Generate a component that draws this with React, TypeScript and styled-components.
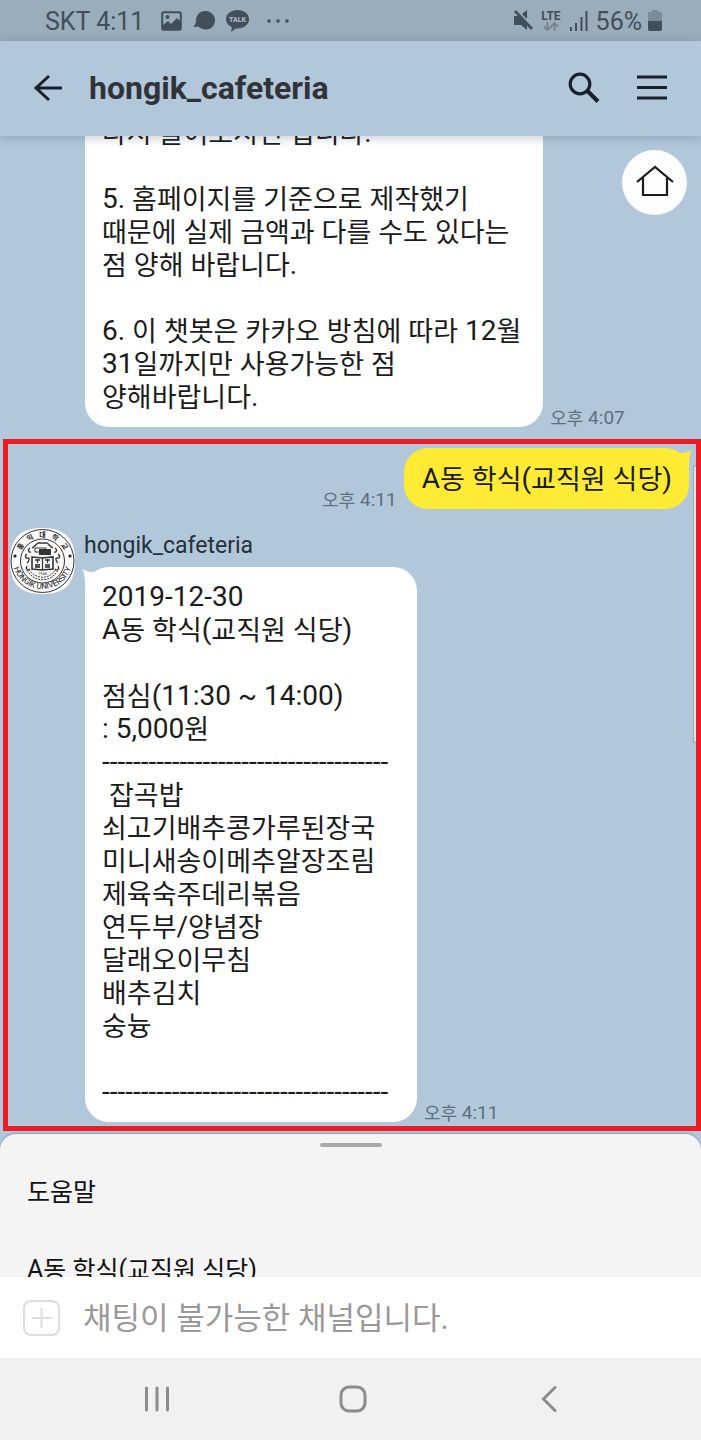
import React from "react";
import styled, { createGlobalStyle } from "styled-components";

const latin = `Roboto, "Noto Sans CJK KR", sans-serif`;

const GlobalStyle = createGlobalStyle`
  * { box-sizing: border-box; }
  body { margin: 0; background: #b2c7da; font-family: ${latin}; color: #1b1b1b; }
  button { border: 0; padding: 0; background: none; font: inherit; color: inherit; cursor: pointer; }
  svg { display: block; flex: none; }
`;

const Screen = styled.div`
  display: flex;
  flex-direction: column;
  height: 100vh;
  overflow: hidden;
`;

const StatusBar = styled.div`
  display: flex;
  flex: none;
  align-items: center;
  justify-content: space-between;
  height: 41px;
  padding: 0 39px 0 45px;
  background: #9bacba;
  color: #434f58;
`;

const StatusGroup = styled.div<{ $gap: number }>`
  display: flex;
  align-items: center;
  gap: ${(p) => p.$gap}px;
`;

const StatusText = styled.span`
  font-size: 25px;
  line-height: 28px;
  padding-top: 2px;
`;

const Network = styled.span`
  display: flex;
  flex-direction: column;
  align-items: center;
  font-size: 12px;
  line-height: 12px;
  font-weight: 700;
`;

const Header = styled.header`
  position: relative;
  z-index: 2;
  display: flex;
  flex: none;
  align-items: center;
  height: 95px;
  padding: 0 34px 2px 33px;
  background: #b2c7da;
  color: #18212a;
  box-shadow: 0 2px 10px rgba(60, 80, 100, 0.3);
`;

const Title = styled.h1`
  flex: 1;
  margin: 0 0 0 26px;
  font-size: 32px;
  line-height: 40px;
  font-weight: 700;
  color: #303438;
`;

const HeaderActions = styled.div`
  display: flex;
  align-items: center;
  gap: 37px;
`;

const Chat = styled.main`
  position: relative;
  display: flex;
  flex: 1;
  flex-direction: column;
  justify-content: flex-end;
  min-height: 0;
  overflow: hidden;
  padding-bottom: 3px;
`;

const HomeButton = styled.button`
  position: absolute;
  top: 14px;
  right: 14px;
  display: grid;
  place-items: center;
  width: 65px;
  height: 65px;
  padding-bottom: 4px;
  border-radius: 50%;
  background: #fcfdfe;
`;

const MessageRow = styled.div<{ $mine?: boolean; $indent?: number }>`
  display: flex;
  flex: none;
  align-items: flex-end;
  gap: 7px;
  justify-content: ${(p) => (p.$mine ? "flex-end" : "flex-start")};
  margin-left: ${(p) => p.$indent ?? 0}px;
`;

const Bubble = styled.div<{ $mine?: boolean }>`
  position: relative;
  min-width: ${(p) => (p.$mine ? "0" : "332px")};
  padding: ${(p) => (p.$mine ? "14px 17px 14px 18px" : "13px 22px 14px 17px")};
  border-radius: 24px;
  background: ${(p) => (p.$mine ? "#ffeb33" : "#ffffff")};
  font-size: 28px;
  line-height: 33px;
  white-space: pre;
`;

const Line = styled.div`
  min-height: 33px;
`;

const Hangul = styled.span`
  font-size: 27px;
  line-height: 0;
  vertical-align: -1px;
`;

const HangulSmall = styled(Hangul)`
  font-size: 18px;
`;

const HangulMenu = styled(Hangul)`
  font-size: 25px;
`;

const Tail = styled.svg<{ $side: "left" | "right" }>`
  position: absolute;
  top: 0;
  ${(p) => p.$side}: -3px;
`;

const Time = styled.time`
  font-size: 19px;
  line-height: 18px;
  color: #5f6f7c;
`;

const Highlighted = styled.section`
  position: relative;
  flex: none;
  margin: 12px 0 0 3px;
  padding: 4px 7px 4px 2px;
  border: 5px solid #ed1c24;
`;

const ScrollThumb = styled.span`
  position: absolute;
  top: 21px;
  right: 0;
  width: 3px;
  height: 278px;
  border: 1px solid #9aa6b2;
  border-right: 0;
  border-radius: 3px 0 0 3px;
  background: #dfe6ee;
`;

const Reply = styled.div`
  display: flex;
  gap: 9px;
  margin-top: 19px;
`;

const ReplyBody = styled.div`
  padding-top: 4px;
`;

const Sender = styled.div`
  margin-bottom: 7px;
  font-size: 23px;
  line-height: 28px;
  color: #25303a;
`;

const Sheet = styled.nav`
  display: flex;
  flex: none;
  flex-direction: column;
  height: 143px;
  overflow: hidden;
  border-radius: 16px 16px 0 0;
  background: #f4f4f4;
  box-shadow: 0 -1px 2px rgba(60, 80, 100, 0.35);
`;

const Grip = styled.span`
  flex: none;
  align-self: center;
  width: 62px;
  height: 4px;
  margin: 9px 0 6px;
  border-radius: 2px;
  background: #a9a9a9;
`;

const SheetItem = styled.button`
  flex: none;
  height: 78px;
  padding: 0 27px;
  text-align: left;
  font-size: 25px;
  line-height: 32px;
  color: #111111;
`;

const Composer = styled.form`
  position: relative;
  display: flex;
  flex: none;
  align-items: center;
  gap: 23px;
  height: 81px;
  padding: 0 23px;
  background: #ffffff;
`;

const MessageInput = styled.input`
  flex: 1;
  min-width: 0;
  height: 48px;
  padding: 2px 0 0;
  border: 0;
  outline: 0;
  background: none;
  font-family: ${latin};
  font-size: 31px;
  &::placeholder { color: #999999; opacity: 1; }
`;

const SystemNav = styled.nav`
  display: grid;
  flex: none;
  grid-template-columns: repeat(3, 1fr);
  height: 82px;
  padding: 0 54px 0 59px;
  background: #f1f1f1;
`;

const SystemButton = styled.button`
  display: grid;
  place-items: center;
`;

/* Hangul is set one step smaller than the Latin text around it. */
function Mixed({ text, as: Run = Hangul }: { text: string; as?: React.ElementType }) {
  return (
    <>
      {text.split(/([가-힣]+)/).map((part, i) => (i % 2 ? <Run key={i}>{part}</Run> : part))}
    </>
  );
}

function Lines({ lines }: { lines: string[] }) {
  return (
    <>
      {lines.map((line, i) => (
        <Line key={i}>
          <Mixed text={line} />
        </Line>
      ))}
    </>
  );
}

const RULE = "-".repeat(37);

const notice = [
  "다시 물어보시면 됩니다.",
  "",
  "5. 홈페이지를 기준으로 제작했기",
  "때문에 실제 금액과 다를 수도 있다는",
  "점 양해 바랍니다.",
  "",
  "6. 이 챗봇은 카카오 방침에 따라 12월",
  "31일까지만 사용가능한 점",
  "양해바랍니다.",
];

const menu = [
  "2019-12-30",
  "A동 학식(교직원 식당)",
  "",
  "점심(11:30 ~ 14:00)",
  ": 5,000원",
  RULE,
  " 잡곡밥",
  "쇠고기배추콩가루된장국",
  "미니새송이메추알장조림",
  "제육숙주데리볶음",
  "연두부/양념장",
  "달래오이무침",
  "배추김치",
  "숭늉",
  "",
  RULE,
];

function Emblem() {
  return (
    <svg width="65" height="66" viewBox="0 0 65 66" role="img" aria-label="Hongik University">
      <defs>
        <path id="upper" d="M8.500 33a24 24 0 0 1 48 0" />
        <path id="lower" d="M2.500 31a30 30 0 0 0 60 0" />
      </defs>
      <path d="M32.500 0C55 0 65 10 65 33S55 66 32.500 66 0 56 0 33 10 0 32.500 0z" fill="#fbfbfb" />
      <g fill="none" stroke="#333" strokeWidth="1">
        <circle cx="32.500" cy="33" r="31.500" />
        <circle cx="32.500" cy="33" r="22" />
        <path d="M22 20c3-1 4-4 6-5h9c2 1 3 4 6 5M20 20c-3 2-1 5 1 4M45 20c3 2 1 5-1 4M17 26c-3 2-1 5 1 4s1 4-1 5M48 26c3 2 1 5-1 4s-1 4 1 5M17 38c-2 3 1 5 3 3M48 38c2 3-1 5-3 3" strokeWidth="1.300" />
        <path d="M17 42c7 13 24 13 31 0M19 41c6 11 21 11 27 0" strokeDasharray="2 1" />
        <path d="M25 20h11v4H25z" fill="#fff" />
      </g>
      <path d="M29 21h12v6H29z" fill="#333" />
      <path d="M22 29l10 1 11-1v12l-11 1-10-1z" fill="#fff" stroke="#333" strokeWidth="1.600" />
      <path d="M32.500 30v12M25 32h5M27.500 31v4M35 32h5M37.500 31v4" stroke="#333" strokeWidth="1.300" />
      <path d="M25 36h5v4h-5zM35 36h5v4h-5z" fill="#555" />
      <circle cx="5" cy="28" r="1.600" fill="#222" />
      <circle cx="60" cy="28" r="1.600" fill="#222" />
      <text x="32.500" y="47" fontSize="4" textAnchor="middle" fill="#333">1946</text>
      <text fontSize="7" fontWeight="700" fill="#222" textAnchor="middle">
        <textPath href="#upper" startOffset="50%">{"홍 익 대 학 교".replace(/ /g, "\u00a0\u00a0\u00a0")}</textPath>
      </text>
      <text fontSize="8" fill="#111" textAnchor="middle">
        <textPath href="#lower" startOffset="50%">HONGIK UNIVERSITY</textPath>
      </text>
    </svg>
  );
}

function StatusLeft() {
  return (
    <StatusGroup $gap={17}>
      <StatusText>SKT 4:11</StatusText>
      <StatusGroup $gap={11}>
        <svg width="21" height="20" viewBox="0 0 21 20" fill="none">
          <rect x="1.200" y="1.200" width="18.600" height="17.600" rx="1.500" stroke="currentColor" strokeWidth="2" />
          <circle cx="6.500" cy="6" r="2" fill="currentColor" />
          <path d="M2 14l5-4 3 3 6-6 4 4v8H2z" fill="currentColor" />
        </svg>
        <svg width="22" height="19" viewBox="0 0 22 19" fill="currentColor">
          <path d="M12.500 0a9.300 9.300 0 1 1-5 17L5 15.500 0 16c1-1 2.500-2.500 3-5A9.500 9.500 0 0 1 12.500 0z" />
        </svg>
        <svg width="23" height="22" viewBox="0 0 23 22">
          <path d="M11.500 0C18 0 23 4 23 9.200s-5 9.200-11.500 9.200H10L5 22l1-4.800C2.500 15.500 0 12.700 0 9.200 0 4 5 0 11.500 0z" fill="currentColor" />
          <text x="11.500" y="12" fontSize="7" fontWeight="900" textAnchor="middle" fill="#a9bac7">TALK</text>
        </svg>
      </StatusGroup>
      <svg width="26" height="4" viewBox="0 0 26 4" fill="currentColor">
        <circle cx="3" cy="2" r="1.800" />
        <circle cx="12" cy="2" r="1.800" />
        <circle cx="21" cy="2" r="1.800" />
      </svg>
    </StatusGroup>
  );
}

function StatusRight() {
  return (
    <StatusGroup $gap={8}>
      <svg width="20" height="21" viewBox="0 0 20 21" fill="currentColor">
        <path d="M1 6h5l8 8.500V20l-6-5H1zM9 4l5-4v9z" />
        <path d="M2 1l17 18" stroke="currentColor" strokeWidth="2.600" />
      </svg>
      <Network>
        LTE
        <svg width="16" height="9" viewBox="0 0 16 9" fill="none" stroke="#75848f" strokeWidth="1.800">
          <path d="M4.500 0v7M1 4.500L4.500 8 8 4.500M11.500 9V2M8 4.500L11.500 1 15 4.500" />
        </svg>
      </Network>
      <svg width="19" height="20" viewBox="0 0 19 20" stroke="currentColor" strokeWidth="2">
        <path d="M2 16v4M7 12v8M12.500 6v14M17.500 0v20" />
      </svg>
      <StatusGroup $gap={6}>
        <StatusText>56%</StatusText>
        <svg width="14" height="21" viewBox="0 0 14 21">
          <path d="M4 0h6v2h4v9H0V2h4z" fill="#7b8b97" />
          <path d="M0 11h14v8q0 2-2 2H2q-2 0-2-2z" fill="currentColor" />
        </svg>
      </StatusGroup>
    </StatusGroup>
  );
}

export default function App() {
  return (
    <Screen>
      <GlobalStyle />
      <StatusBar>
        <StatusLeft />
        <StatusRight />
      </StatusBar>

      <Header>
        <button aria-label="Back">
          <svg width="30" height="28" viewBox="0 0 30 28" fill="none" stroke="currentColor" strokeWidth="3">
            <path d="M16 2L3 14l13 12M3 14h26" />
          </svg>
        </button>
        <Title>hongik_cafeteria</Title>
        <HeaderActions>
          <button aria-label="Search">
            <svg width="32" height="31" viewBox="0 0 32 31" fill="none" stroke="currentColor">
              <circle cx="12" cy="12" r="9.800" strokeWidth="3.200" />
              <path d="M19 18.500L30 29.500" strokeWidth="4" />
            </svg>
          </button>
          <button aria-label="Menu">
            <svg width="30" height="25" viewBox="0 0 30 25" stroke="currentColor" strokeWidth="3">
              <path d="M0 2h30M0 12.500h30M0 23h30" />
            </svg>
          </button>
        </HeaderActions>
      </Header>

      <Chat>
        <MessageRow $indent={85}>
          <Bubble>
            <Lines lines={notice} />
          </Bubble>
          <Time>
            <Mixed text="오후 4:07" as={HangulSmall} />
          </Time>
        </MessageRow>

        <Highlighted>
          <ScrollThumb />
          <MessageRow $mine>
            <Time>
              <Mixed text="오후 4:11" as={HangulSmall} />
            </Time>
            <Bubble $mine>
              <Lines lines={["A동 학식(교직원 식당)"]} />
              <Tail $side="right" width="22" height="20" viewBox="0 0 22 20" fill="#ffeb33">
                <path d="M8 4c4 2 8 1 14-2-2 3-3 7-3 18L4 8z" />
              </Tail>
            </Bubble>
          </MessageRow>
          <Reply>
            <Emblem />
            <ReplyBody>
              <Sender>hongik_cafeteria</Sender>
              <MessageRow $indent={1}>
                <Bubble>
                  <Tail $side="left" width="22" height="20" viewBox="0 0 22 20" fill="#ffffff">
                    <path d="M14 4C10 6 6 5 0 2c2 3 3 7 3 18L18 8z" />
                  </Tail>
                  <Lines lines={menu} />
                </Bubble>
                <Time>
                  <Mixed text="오후 4:11" as={HangulSmall} />
                </Time>
              </MessageRow>
            </ReplyBody>
          </Reply>
        </Highlighted>

        <HomeButton aria-label="Home">
          <svg width="38" height="32" viewBox="0 0 38 32" fill="none" stroke="#1b1b1b" strokeWidth="2.200">
            <path d="M1 17L19 2l18 15M7 13v17h24V13" />
          </svg>
        </HomeButton>
      </Chat>

      <Sheet>
        <Grip />
        <SheetItem>
          <Mixed text="도움말" as={HangulMenu} />
        </SheetItem>
        <SheetItem>
          <Mixed text="A동 학식(교직원 식당)" as={HangulMenu} />
        </SheetItem>
      </Sheet>

      <Composer>
        <button type="button" aria-label="Attach">
          <svg width="37" height="36" viewBox="0 0 37 36" fill="none" stroke="#dcdddd" strokeWidth="2">
            <rect x="1" y="1" width="35" height="34" rx="7" />
            <path d="M18.500 8v20M8.500 18h20" />
          </svg>
        </button>
        <MessageInput readOnly aria-label="메시지" placeholder="채팅이 불가능한 채널입니다." />
      </Composer>

      <SystemNav>
        <SystemButton aria-label="Recent apps">
          <svg width="26" height="26" viewBox="0 0 26 26" stroke="#8c8c8c" strokeWidth="3" strokeLinecap="round">
            <path d="M2.500 2v22M13 2v22M23.500 2v22" />
          </svg>
        </SystemButton>
        <SystemButton aria-label="Home screen">
          <svg width="28" height="28" viewBox="0 0 28 28" fill="none" stroke="#8c8c8c" strokeWidth="3">
            <rect x="2" y="2" width="24" height="24" rx="8" />
          </svg>
        </SystemButton>
        <SystemButton aria-label="Go back">
          <svg width="16" height="28" viewBox="0 0 16 28" fill="none" stroke="#8c8c8c" strokeWidth="3" strokeLinecap="round">
            <path d="M14 2.500L2.500 14 14 25.500" />
          </svg>
        </SystemButton>
      </SystemNav>
    </Screen>
  );
}
